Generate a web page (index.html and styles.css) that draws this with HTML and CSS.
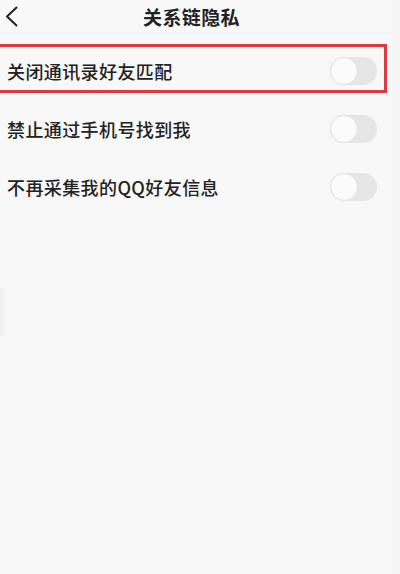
FILE: index.html
```html
<!DOCTYPE html>
<html lang="zh-CN">
<head>
<meta charset="utf-8">
<link rel="stylesheet" href="styles.css">
</head>
<body>
<div class="page">
  <header class="topbar">
    <span class="back">
      <svg width="15" height="21" viewBox="0 0 15 21"><path d="M12.5 1.5 L3 10.5 L12.5 19.5" fill="none" stroke="#222" stroke-width="2" stroke-linecap="round" stroke-linejoin="round"/></svg>
    </span>
    <h1 class="title">关系链隐私</h1>
  </header>
  <ul class="list">
    <li class="row highlighted">
      <span class="label">关闭通讯录好友匹配</span>
      <span class="switch"><span class="knob"></span></span>
      <span class="mark"></span>
    </li>
    <li class="row">
      <span class="label">禁止通过手机号找到我</span>
      <span class="switch"><span class="knob"></span></span>
    </li>
    <li class="row">
      <span class="label">不再采集我的QQ好友信息</span>
      <span class="switch"><span class="knob"></span></span>
    </li>
  </ul>
  <span class="edge-tab"></span>
  <span class="edge-right"></span>
</div>
</body>
</html>
```

FILE: styles.css
```css
html, body {
  margin: 0;
  padding: 0;
  background: #f8f8f8;
}
body {
  font-family: "Noto Sans CJK SC", "Noto Sans", sans-serif;
  color: #222;
}
.page {
  position: relative;
  width: 400px;
  height: 574px;
  overflow: hidden;
}
.topbar {
  position: relative;
  height: 32px;
  display: flex;
  align-items: center;
  justify-content: center;
  border-bottom: 3px solid #eff6fb;
}
.back {
  position: absolute;
  left: 4px;
  top: 6px;
  display: flex;
}
.title {
  margin: 0 0 0 -17px;
  font-size: 19px;
  font-weight: 700;
  line-height: 1;
  letter-spacing: 0.4px;
}
.list {
  list-style: none;
  margin: 0;
  padding: 0;
  margin-top: 7px;
}
.row {
  position: relative;
  height: 58px;
  display: flex;
  align-items: center;
  justify-content: space-between;
  padding: 0 23px 0 7px;
}
.label {
  font-size: 18px;
  font-weight: 500;
  line-height: 1;
  letter-spacing: 0.4px;
}
.switch {
  width: 47px;
  height: 28px;
  border-radius: 14px;
  background: #e6e6e6;
  display: flex;
  align-items: center;
  box-sizing: border-box;
}
.knob {
  width: 28px;
  height: 28px;
  border-radius: 50%;
  background: #fbfbfb;
  box-sizing: border-box;
  border: 1.5px solid #e3e3e3;
}
.mark {
  position: absolute;
  left: -10px;
  right: 13px;
  top: 2px;
  bottom: 7px;
  border: 3px solid #dc3a40;
}
.edge-tab {
  position: absolute;
  left: 0;
  top: 288px;
  width: 6px;
  height: 48px;
  background: linear-gradient(90deg, #eeeeee, #f6f6f6);
}
.edge-right {
  position: absolute;
  right: 0;
  top: 0;
  width: 8px;
  height: 574px;
  background: #f5f5f5;
}
```
